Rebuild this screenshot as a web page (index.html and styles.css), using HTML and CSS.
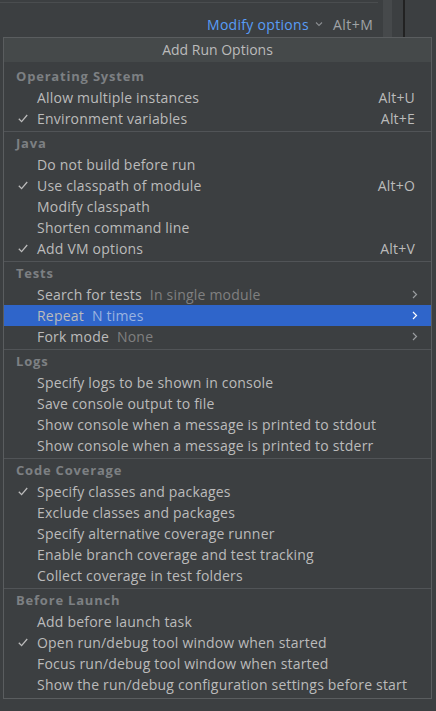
FILE: index.html
```html
<!DOCTYPE html>
<html>
<head>
<meta charset="utf-8">
<link rel="stylesheet" href="styles.css">
</head>
<body>
<div class="backdrop">
  <div class="topline"></div>
  <div class="scrollstrip"></div>
  <div class="darkline"></div>
  <div class="modify-row">
    <span class="link">Modify options</span>
    <svg class="chev" width="8" height="6" viewBox="0 0 8 6"><path d="M1 1.5 L4 4.5 L7 1.5" fill="none" stroke="#8a8d90" stroke-width="1.1"/></svg>
    <span class="shortcut-top">Alt+M</span>
  </div>
</div>
<div class="popup">
  <div class="title">Add Run Options</div>
  <div class="body">
    <div class="header">Operating System</div>
    <div class="row"><span class="label">Allow multiple instances</span><span class="key">Alt+U</span></div>
    <div class="row"><svg class="check" width="10" height="9" viewBox="0 0 10 9"><path d="M0.8 4.8 L3.6 7.6 L9.2 1" fill="none" stroke="#bbbbbb" stroke-width="1.3"/></svg><span class="label">Environment variables</span><span class="key">Alt+E</span></div>
    <div class="sep"></div>
    <div class="header">Java</div>
    <div class="row"><span class="label">Do not build before run</span></div>
    <div class="row"><svg class="check" width="10" height="9" viewBox="0 0 10 9"><path d="M0.8 4.8 L3.6 7.6 L9.2 1" fill="none" stroke="#bbbbbb" stroke-width="1.3"/></svg><span class="label">Use classpath of module</span><span class="key">Alt+O</span></div>
    <div class="row"><span class="label">Modify classpath</span></div>
    <div class="row"><span class="label">Shorten command line</span></div>
    <div class="row"><svg class="check" width="10" height="9" viewBox="0 0 10 9"><path d="M0.8 4.8 L3.6 7.6 L9.2 1" fill="none" stroke="#bbbbbb" stroke-width="1.3"/></svg><span class="label">Add VM options</span><span class="key">Alt+V</span></div>
    <div class="sep"></div>
    <div class="header">Tests</div>
    <div class="row sub"><span class="label">Search for tests<span class="hint">In single module</span></span><svg class="arrow" width="6" height="9" viewBox="0 0 6 9"><path d="M1 1 L4.5 4.5 L1 8" fill="none" stroke="#9a9da0" stroke-width="1.2"/></svg></div>
    <div class="row sub selected"><span class="label">Repeat<span class="hint">N times</span></span><svg class="arrow" width="6" height="9" viewBox="0 0 6 9"><path d="M1 1 L4.5 4.5 L1 8" fill="none" stroke="#ffffff" stroke-width="1.2"/></svg></div>
    <div class="row sub"><span class="label">Fork mode<span class="hint">None</span></span><svg class="arrow" width="6" height="9" viewBox="0 0 6 9"><path d="M1 1 L4.5 4.5 L1 8" fill="none" stroke="#9a9da0" stroke-width="1.2"/></svg></div>
    <div class="sep"></div>
    <div class="header">Logs</div>
    <div class="row"><span class="label">Specify logs to be shown in console</span></div>
    <div class="row"><span class="label">Save console output to file</span></div>
    <div class="row"><span class="label">Show console when a message is printed to stdout</span></div>
    <div class="row"><span class="label">Show console when a message is printed to stderr</span></div>
    <div class="sep"></div>
    <div class="header">Code Coverage</div>
    <div class="row"><svg class="check" width="10" height="9" viewBox="0 0 10 9"><path d="M0.8 4.8 L3.6 7.6 L9.2 1" fill="none" stroke="#bbbbbb" stroke-width="1.3"/></svg><span class="label">Specify classes and packages</span></div>
    <div class="row"><span class="label">Exclude classes and packages</span></div>
    <div class="row"><span class="label">Specify alternative coverage runner</span></div>
    <div class="row"><span class="label">Enable branch coverage and test tracking</span></div>
    <div class="row"><span class="label">Collect coverage in test folders</span></div>
    <div class="sep"></div>
    <div class="header">Before Launch</div>
    <div class="row"><span class="label">Add before launch task</span></div>
    <div class="row"><svg class="check" width="10" height="9" viewBox="0 0 10 9"><path d="M0.8 4.8 L3.6 7.6 L9.2 1" fill="none" stroke="#bbbbbb" stroke-width="1.3"/></svg><span class="label">Open run/debug tool window when started</span></div>
    <div class="row"><span class="label">Focus run/debug tool window when started</span></div>
    <div class="row"><span class="label">Show the run/debug configuration settings before start</span></div>
  </div>
</div>
</body>
</html>
```
FILE: styles.css
```css
html, body {
  margin: 0;
  padding: 0;
  background: #3c3f41;
  width: 436px;
  height: 711px;
  overflow: hidden;
  font-family: "Open Sans", "Noto Sans", sans-serif;
  font-size: 13px;
  color: #bbbbbb;
}
.backdrop {
  position: relative;
  height: 37px;
}
.topline {
  position: absolute;
  left: 0;
  top: 2px;
  width: 378px;
  height: 1px;
  background: #4a4d4f;
}
.scrollstrip {
  position: absolute;
  left: 383px;
  top: 0;
  width: 9px;
  height: 37px;
  background: #46494b;
}
.darkline {
  position: absolute;
  left: 403px;
  top: 0;
  width: 2px;
  height: 37px;
  background: #222;
}
.modify-row {
  position: absolute;
  left: 207px;
  top: 14px;
  display: flex;
  align-items: center;
  height: 20px;
}
.link {
  color: #589df6;
  font-size: 14px;
  letter-spacing: 0.3px;
}
.chev {
  margin-left: 6px;
  margin-right: 10px;
}
.shortcut-top {
  color: #a0a3a6;
  font-size: 14px;
  letter-spacing: 0.5px;
}
.popup {
  position: absolute;
  left: 3px;
  top: 37px;
  width: 427px;
  border: 1px solid #5a5d5f;
  background: #3c3f41;
}
.title {
  height: 24px;
  line-height: 24px;
  background: #45494a;
  text-align: center;
  color: #bbbbbb;
  font-size: 14px;
}
.body {
  padding: 4px 0 3px;
}
.header {
  height: 21px;
  line-height: 21px;
  padding-left: 12px;
  font-weight: bold;
  color: #7d8083;
  font-size: 13px;
  letter-spacing: 0.8px;
}
.row {
  height: 21px;
  line-height: 21px;
  padding-left: 33px;
  padding-right: 16px;
  display: flex;
  align-items: center;
  position: relative;
  font-size: 14px;
  letter-spacing: 0.2px;
}
.row.sub {
  padding-right: 13px;
}
.check {
  position: absolute;
  left: 14px;
  top: 6px;
}
.label {
  flex: 1;
}
.hint {
  color: #808080;
  margin-left: 8px;
}
.key {
  color: #bbbbbb;
}
.arrow {
  display: block;
}
.selected {
  background: #2f65ca;
}
.selected .hint {
  color: #9ab3e0;
}
.sep {
  height: 4px;
  position: relative;
}
.sep::after {
  content: "";
  position: absolute;
  left: 0;
  right: 0;
  top: 2px;
  height: 1px;
  background: #515457;
}
```
